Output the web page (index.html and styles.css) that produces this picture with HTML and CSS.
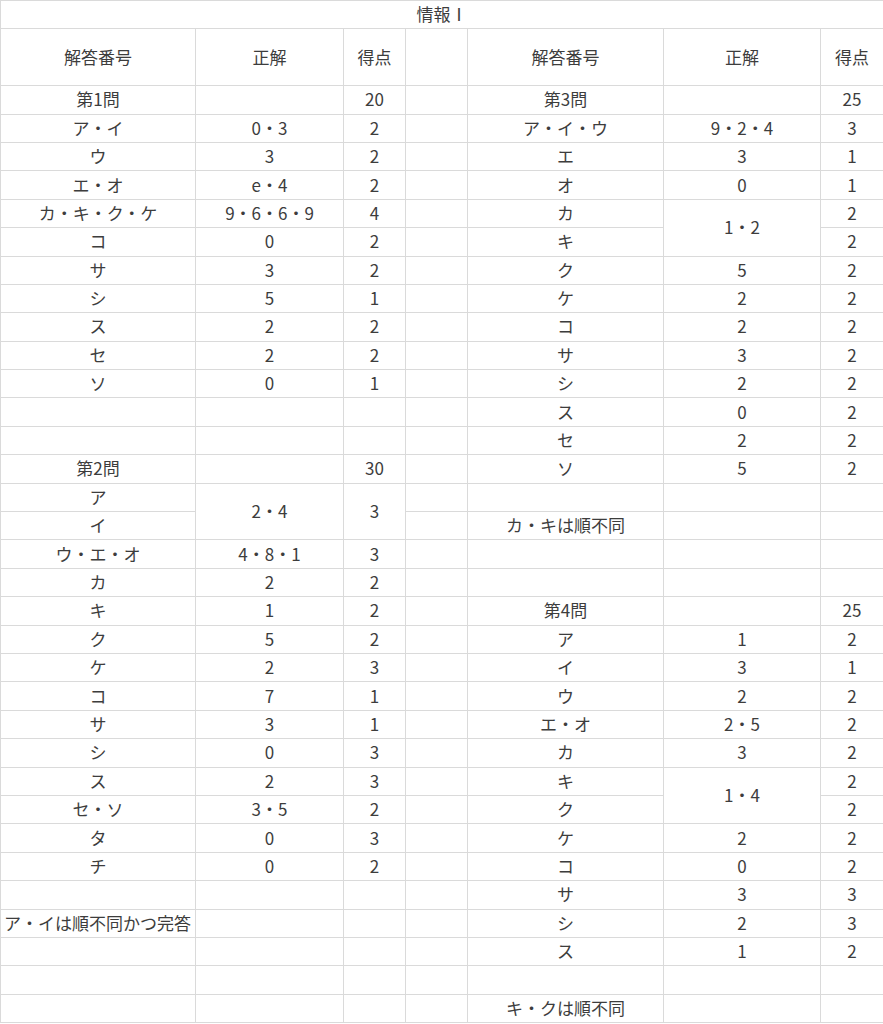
FILE: index.html
```html
<!DOCTYPE html>
<html lang="ja">
<head>
<meta charset="utf-8">
<title>情報Ⅰ</title>
<link rel="stylesheet" href="styles.css">
</head>
<body>
<table class="sheet">
<colgroup>
<col class="c1"><col class="c2"><col class="c3"><col class="c4"><col class="c5"><col class="c6"><col class="c7">
</colgroup>
<tbody>
<tr><td colspan="7" class="title">情報Ⅰ</td></tr>
<tr><td rowspan="2">解答番号</td><td rowspan="2">正解</td><td rowspan="2">得点</td><td rowspan="2"></td><td rowspan="2">解答番号</td><td rowspan="2">正解</td><td rowspan="2">得点</td></tr>
<tr></tr>
<tr><td>第1問</td><td></td><td>20</td><td></td><td>第3問</td><td></td><td>25</td></tr>
<tr><td>ア・イ</td><td>0・3</td><td>2</td><td></td><td>ア・イ・ウ</td><td>9・2・4</td><td>3</td></tr>
<tr><td>ウ</td><td>3</td><td>2</td><td></td><td>エ</td><td>3</td><td>1</td></tr>
<tr><td>エ・オ</td><td>e・4</td><td>2</td><td></td><td>オ</td><td>0</td><td>1</td></tr>
<tr><td>カ・キ・ク・ケ</td><td>9・6・6・9</td><td>4</td><td></td><td>カ</td><td rowspan="2">1・2</td><td>2</td></tr>
<tr><td>コ</td><td>0</td><td>2</td><td></td><td>キ</td><td>2</td></tr>
<tr><td>サ</td><td>3</td><td>2</td><td></td><td>ク</td><td>5</td><td>2</td></tr>
<tr><td>シ</td><td>5</td><td>1</td><td></td><td>ケ</td><td>2</td><td>2</td></tr>
<tr><td>ス</td><td>2</td><td>2</td><td></td><td>コ</td><td>2</td><td>2</td></tr>
<tr><td>セ</td><td>2</td><td>2</td><td></td><td>サ</td><td>3</td><td>2</td></tr>
<tr><td>ソ</td><td>0</td><td>1</td><td></td><td>シ</td><td>2</td><td>2</td></tr>
<tr><td></td><td></td><td></td><td></td><td>ス</td><td>0</td><td>2</td></tr>
<tr><td></td><td></td><td></td><td></td><td>セ</td><td>2</td><td>2</td></tr>
<tr><td>第2問</td><td></td><td>30</td><td></td><td>ソ</td><td>5</td><td>2</td></tr>
<tr><td>ア</td><td rowspan="2">2・4</td><td rowspan="2">3</td><td></td><td></td><td></td><td></td></tr>
<tr><td>イ</td><td></td><td>カ・キは順不同</td><td></td><td></td></tr>
<tr><td>ウ・エ・オ</td><td>4・8・1</td><td>3</td><td></td><td></td><td></td><td></td></tr>
<tr><td>カ</td><td>2</td><td>2</td><td></td><td></td><td></td><td></td></tr>
<tr><td>キ</td><td>1</td><td>2</td><td></td><td>第4問</td><td></td><td>25</td></tr>
<tr><td>ク</td><td>5</td><td>2</td><td></td><td>ア</td><td>1</td><td>2</td></tr>
<tr><td>ケ</td><td>2</td><td>3</td><td></td><td>イ</td><td>3</td><td>1</td></tr>
<tr><td>コ</td><td>7</td><td>1</td><td></td><td>ウ</td><td>2</td><td>2</td></tr>
<tr><td>サ</td><td>3</td><td>1</td><td></td><td>エ・オ</td><td>2・5</td><td>2</td></tr>
<tr><td>シ</td><td>0</td><td>3</td><td></td><td>カ</td><td>3</td><td>2</td></tr>
<tr><td>ス</td><td>2</td><td>3</td><td></td><td>キ</td><td rowspan="2">1・4</td><td>2</td></tr>
<tr><td>セ・ソ</td><td>3・5</td><td>2</td><td></td><td>ク</td><td>2</td></tr>
<tr><td>タ</td><td>0</td><td>3</td><td></td><td>ケ</td><td>2</td><td>2</td></tr>
<tr><td>チ</td><td>0</td><td>2</td><td></td><td>コ</td><td>0</td><td>2</td></tr>
<tr><td></td><td></td><td></td><td></td><td>サ</td><td>3</td><td>3</td></tr>
<tr><td class="left">ア・イは順不同かつ完答</td><td></td><td></td><td></td><td>シ</td><td>2</td><td>3</td></tr>
<tr><td></td><td></td><td></td><td></td><td>ス</td><td>1</td><td>2</td></tr>
<tr><td></td><td></td><td></td><td></td><td></td><td></td><td></td></tr>
<tr><td></td><td></td><td></td><td></td><td>キ・クは順不同</td><td></td><td></td></tr>
</tbody>
</table>
</body>
</html>
```
FILE: styles.css
```css
html, body {
  margin: 0;
  padding: 0;
  background: #ffffff;
  overflow: hidden;
}

.sheet {
  table-layout: fixed;
  border-collapse: separate;
  border-spacing: 0;
  width: 884px;
  border-top: 1px solid #dadada;
  border-left: 1px solid #dadada;
  font-family: "Noto Sans CJK JP", "Noto Sans", sans-serif;
  font-size: 17px;
  color: #3d3d3d;
}

.c1 { width: 195px; }
.c2 { width: 148px; }
.c3 { width: 62px; }
.c4 { width: 62px; }
.c5 { width: 196px; }
.c6 { width: 157px; }
.c7 { width: 63px; }

.sheet tr {
  height: 28.4px;
}

.sheet td {
  box-sizing: border-box;
  padding: 0 0 1px 0;
  border-right: 1px solid #dadada;
  border-bottom: 1px solid #dadada;
  text-align: center;
  vertical-align: middle;
  line-height: 20px;
  white-space: nowrap;
  overflow: visible;
}

.sheet td.left {
  text-align: left;
  padding-left: 3px;
}
```
